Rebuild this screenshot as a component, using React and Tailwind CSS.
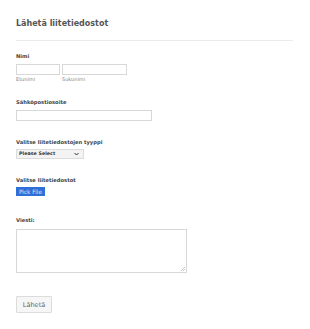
export default function App() {
  const font = { fontFamily: '"DejaVu Sans", Verdana, sans-serif' };
  return (
    <div className="w-[310px] h-[329px] bg-white" style={font}>
      <div className="pl-[16px] pt-[18px]">
        <div className="text-[8px] leading-[12px] font-bold text-[#555]">Lähetä liitetiedostot</div>
        <div className="mt-[10px] w-[277px] border-b border-[#ebebeb]"></div>

        <div className="mt-[10px] text-[5.2px] leading-[10px] font-bold text-[#444]">Nimi</div>
        <div className="mt-[3px] flex gap-[2px]">
          <div className="flex flex-col">
            <div className="w-[44px] h-[11px] border border-[#d8d8d8] bg-white"></div>
            <div className="mt-[1px] text-[5px] leading-[6px] text-[#888]">Etunimi</div>
          </div>
          <div className="flex flex-col">
            <div className="w-[65px] h-[11px] border border-[#d8d8d8] bg-white"></div>
            <div className="mt-[1px] text-[5px] leading-[6px] text-[#888]">Sukunimi</div>
          </div>
        </div>

        <div className="mt-[15px] text-[5.2px] leading-[10px] font-bold text-[#444]">Sähköpostiosoite</div>
        <div className="mt-[3px] w-[136px] h-[11px] border border-[#d8d8d8] bg-white"></div>

        <div className="mt-[16px] text-[5.2px] leading-[10px] font-bold text-[#444]">Valitse liitetiedostojen tyyppi</div>
        <div className="mt-[2px] w-[68px] h-[10px] border border-[#dcdcdc] bg-[#f3f3f3] flex items-center justify-between pl-[2px] pr-[4px]">
          <span className="text-[4.8px] leading-[6px] font-bold text-[#333]">Please Select</span>
          <svg width="5" height="4" viewBox="0 0 5 4"><path d="M0.5 1 L2.5 3 L4.5 1" stroke="#333" strokeWidth="1" fill="none" /></svg>
        </div>

        <div className="mt-[16px] text-[5.2px] leading-[10px] font-bold text-[#444]">Valitse liitetiedostot</div>
        <div className="mt-[2px] w-[29px] h-[9px] bg-[#2e6fd8] flex items-center justify-center">
          <span className="text-[5.8px] leading-[6px] text-[#dbe6fa]">Pick File</span>
        </div>

        <div className="mt-[19px] text-[5.2px] leading-[10px] font-bold text-[#444]">Viesti:</div>
        <div className="relative mt-[4px] w-[171px] h-[44px] border border-[#d8d8d8] bg-white">
          <svg className="absolute right-[1px] bottom-[1px]" width="4" height="4" viewBox="0 0 4 4"><path d="M4 0 L0 4 M4 2 L2 4" stroke="#aaa" strokeWidth="0.6" /></svg>
        </div>

        <div className="mt-[23px] w-[36px] h-[17px] border border-[#dcdcdc] bg-[#f6f6f6] rounded-[1px] flex items-center justify-center">
          <span className="text-[6.6px] leading-[8px] text-[#666]">Lähetä</span>
        </div>
      </div>
    </div>
  );
}
